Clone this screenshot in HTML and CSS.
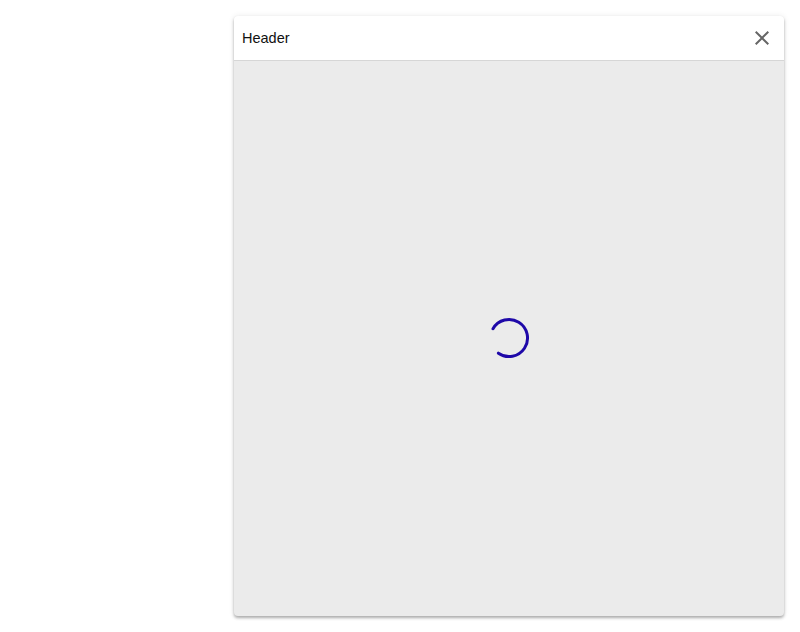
FILE: index.html
```html
<!DOCTYPE html>
<html>
<head>
<meta charset="utf-8">
<link rel="stylesheet" href="styles.css">
</head>
<body>
<div class="page">
  <div class="panel">
    <div class="panel-header">
      <span class="title">Header</span>
      <button class="close" aria-label="Close">
        <svg width="24" height="24" viewBox="0 0 24 24"><path fill="#666" d="M19 6.41L17.59 5 12 10.59 6.41 5 5 6.41 10.59 12 5 17.59 6.41 19 12 13.41 17.59 19 19 17.59 13.41 12z"/></svg>
      </button>
    </div>
    <div class="panel-body">
      <svg class="spinner" width="44" height="44" viewBox="0 0 44 44">
        <path d="M 6.02 12.75 A 18.5 18.5 0 1 1 11.39 37.15" fill="none" stroke="#1e08a8" stroke-width="3" stroke-linecap="round"/>
      </svg>
    </div>
  </div>
</div>
</body>
</html>
```
FILE: styles.css
```css
html, body {
  margin: 0;
  padding: 0;
  background: #fff;
  font-family: "Liberation Sans", Arial, sans-serif;
}
.page {
  display: flex;
  justify-content: flex-end;
  padding: 16px 16px 16px 0;
}
.panel {
  width: 550px;
  height: 600px;
  display: flex;
  flex-direction: column;
  border-radius: 4px;
  overflow: hidden;
  background: #ebebeb;
  box-shadow: 0 2px 3px rgba(0,0,0,0.3), 0 0 6px rgba(0,0,0,0.08);
}
.panel-header {
  height: 44px;
  flex: none;
  display: flex;
  align-items: center;
  justify-content: space-between;
  padding: 0 10px 0 8px;
  background: #fff;
  border-bottom: 1px solid #d6d6d6;
}
.title {
  font-size: 14.5px;
  color: #111;
  margin-bottom: 0;
}
.close {
  width: 24px;
  height: 24px;
  padding: 0;
  border: 0;
  background: none;
  display: flex;
}
.panel-body {
  flex: 1;
  display: flex;
  align-items: center;
  justify-content: center;
  padding-bottom: 2px;
}
```
